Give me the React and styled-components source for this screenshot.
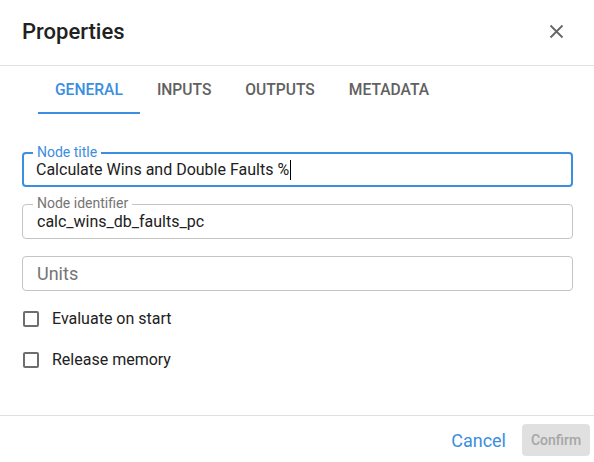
import React from "react";
import styled, { createGlobalStyle } from "styled-components";

const GlobalStyle = createGlobalStyle`
  html, body {
    margin: 0;
    padding: 0;
    background: #fff;
    font-family: Roboto, "Noto Sans", "Liberation Sans", sans-serif;
  }
  * { box-sizing: border-box; }
`;

const BLUE = "#3b8ee0";

const Dialog = styled.div`
  width: 594px;
  height: 462px;
  display: flex;
  flex-direction: column;
  background: #fff;
  color: #212121;
`;

const Header = styled.div`
  height: 66px;
  display: flex;
  align-items: center;
  justify-content: space-between;
  padding: 0 30px 0 22px;
  border-bottom: 1px solid #e0e0e0;

  h2 {
    margin: 0 0 2px;
    font-size: 22px;
    font-weight: 500;
  }
`;

const CloseButton = styled.button`
  border: none;
  background: none;
  padding: 0;
  width: 16px;
  height: 16px;
  display: flex;
  align-items: center;
  justify-content: center;
  cursor: pointer;
  margin-bottom: 2px;
`;

const TabList = styled.div`
  display: flex;
  padding-left: 38px;
  height: 48px;
`;

const Tab = styled.div`
  padding: 2px 17px 0;
  display: flex;
  align-items: center;
  font-size: 15.6px;
  font-weight: 500;
  text-transform: uppercase;
  color: ${(p) => (p.$active ? BLUE : "#616161")};
  border-bottom: 2px solid ${(p) => (p.$active ? BLUE : "transparent")};
`;

const Body = styled.div`
  flex: 1;
  padding: 38px 21px 0 22px;
  display: flex;
  flex-direction: column;
`;

const Field = styled.div`
  position: relative;
  height: 35px;
  margin-bottom: ${(p) => (p.$last ? "7px" : "17px")};
  border: ${(p) => (p.$focused ? `2px solid ${BLUE}` : "1px solid #c4c4c4")};
  border-radius: 4px;
  display: flex;
  align-items: center;
  padding-left: ${(p) => (p.$focused ? "12px" : "14px")};
  font-size: ${(p) => (p.$empty ? "18px" : "16px")};
  color: ${(p) => (p.$empty ? "#757575" : "#212121")};
`;

const FloatLabel = styled.span`
  position: absolute;
  top: -10px;
  left: ${(p) => (p.$focused ? "9px" : "10px")};
  padding: 0 4px;
  background: #fff;
  font-size: 14px;
  line-height: 16px;
  color: ${(p) => (p.$focused ? BLUE : "#757575")};
`;

const Caret = styled.span`
  display: inline-block;
  width: 1px;
  height: 20px;
  background: #000;
  margin-left: 1px;
`;

const CheckRow = styled.label`
  display: flex;
  align-items: center;
  gap: 13px;
  height: 41px;
  padding-left: 1px;
  font-size: 16px;
  color: #212121;
`;

const Box = styled.span`
  width: 16px;
  height: 16px;
  border: 2px solid #6e6e6e;
  border-radius: 2px;
`;

const Footer = styled.div`
  height: 47px;
  border-top: 1px solid #e0e0e0;
  display: flex;
  justify-content: flex-end;
  align-items: flex-start;
  padding: 8px 4px 0 0;
  gap: 8px;
`;

const TextButton = styled.button`
  border: none;
  background: none;
  font-family: inherit;
  font-size: 18px;
  color: ${BLUE};
  height: 32px;
  padding: 0 8px;
  cursor: pointer;
`;

const DisabledButton = styled.button`
  border: none;
  border-radius: 4px;
  background: #e0e0e0;
  color: #a6a6a6;
  font-family: inherit;
  font-size: 14px;
  font-weight: 500;
  height: 32px;
  width: 68px;
  padding: 0;
`;

const tabs = ["General", "Inputs", "Outputs", "Metadata"];

export default function App() {
  return (
    <>
      <GlobalStyle />
      <Dialog>
        <Header>
          <h2>Properties</h2>
          <CloseButton aria-label="close">
            <svg width="15" height="15" viewBox="0 0 15 15">
              <path d="M1.5 1.5 L13.5 13.5 M13.5 1.5 L1.5 13.5" stroke="#666" strokeWidth="1.8" />
            </svg>
          </CloseButton>
        </Header>
        <TabList>
          {tabs.map((t, i) => (
            <Tab key={t} $active={i === 0}>
              {t}
            </Tab>
          ))}
        </TabList>
        <Body>
          <Field $focused>
            <FloatLabel $focused>Node title</FloatLabel>
            Calculate Wins and Double Faults %<Caret />
          </Field>
          <Field>
            <FloatLabel>Node identifier</FloatLabel>
            calc_wins_db_faults_pc
          </Field>
          <Field $empty $last>
            Units
          </Field>
          <CheckRow>
            <Box />
            Evaluate on start
          </CheckRow>
          <CheckRow>
            <Box />
            Release memory
          </CheckRow>
        </Body>
        <Footer>
          <TextButton>Cancel</TextButton>
          <DisabledButton disabled>Confirm</DisabledButton>
        </Footer>
      </Dialog>
    </>
  );
}
